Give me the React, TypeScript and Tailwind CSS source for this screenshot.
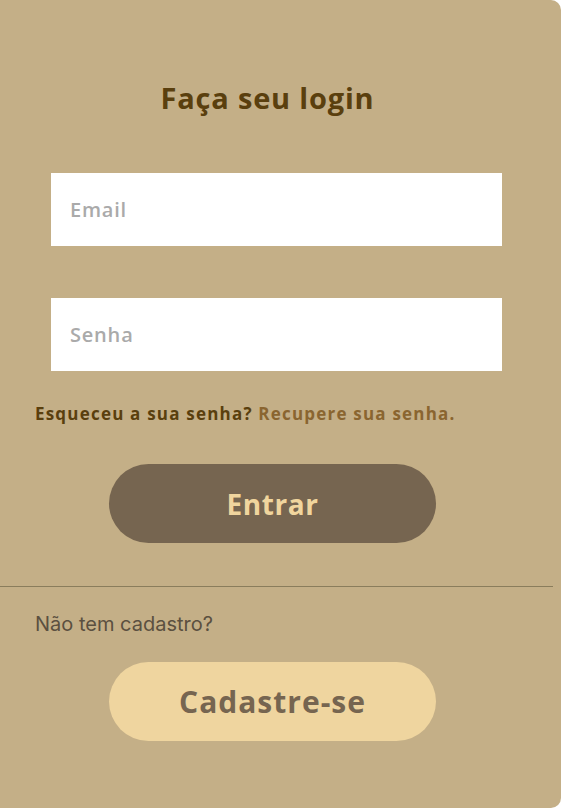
import React from 'react';

const App: React.FC = () => {
  return (
    <div className="w-[561px] h-[808px] bg-white">
      <div className="flex flex-col w-full h-full bg-[#c4af87] rounded-r-[10px] font-['Open_Sans',sans-serif]">
        <h1 className="mt-[80px] pr-[26px] text-center text-[29px] leading-[36px] font-bold tracking-[0.8px] text-[#5a3f0e]">
          Faça seu login
        </h1>
        <form className="flex flex-col mt-[57px]">
          <input
            placeholder="Email"
            className="mx-[51px] w-[451px] h-[73px] px-[19px] bg-white text-[20px] font-semibold outline-none placeholder:text-[#aaaaaa] tracking-[0.8px]"
          />
          <input
            type="password"
            placeholder="Senha"
            className="mx-[51px] mt-[52px] w-[451px] h-[73px] px-[19px] bg-white text-[20px] font-semibold outline-none placeholder:text-[#aaaaaa] tracking-[0.8px]"
          />
          <p className="mt-[31px] ml-[35px] text-[17px] leading-[24px] font-bold tracking-[1.2px] text-[#5a3f0e]">
            Esqueceu a sua senha? <a className="text-[#8a6530]">Recupere sua senha.</a>
          </p>
          <button
            type="button"
            className="mt-[38px] ml-[109px] w-[327px] h-[79px] rounded-full bg-[#766550] text-[28px] font-bold tracking-[0.6px] text-[#f0d59e]"
          >
            Entrar
          </button>
        </form>
        <div className="mt-[43px] w-[553px] h-px bg-[#8a7d5c]" />
        <p className="mt-[25px] ml-[35px] text-[20px] leading-[24px] text-[#5b5040] font-['Inter',sans-serif]">
          Não tem cadastro?
        </p>
        <button
          type="button"
          className="mt-[26px] ml-[109px] w-[327px] h-[79px] rounded-full bg-[#efd59f] text-[30px] font-bold tracking-[1px] text-[#766550]"
        >
          Cadastre-se
        </button>
      </div>
    </div>
  );
};

export default App;
